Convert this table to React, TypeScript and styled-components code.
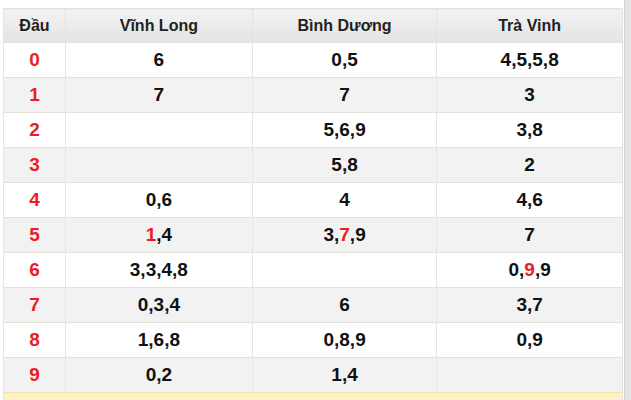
import styled, { createGlobalStyle } from "styled-components";

interface IRow {
  head: string;
  cols: string[];
}

// "*" before a digit marks it red
const rows: IRow[] = [
  { head: "0", cols: ["6", "0,5", "4,5,5,8"] },
  { head: "1", cols: ["7", "7", "3"] },
  { head: "2", cols: ["", "5,6,9", "3,8"] },
  { head: "3", cols: ["", "5,8", "2"] },
  { head: "4", cols: ["0,6", "4", "4,6"] },
  { head: "5", cols: ["*1,4", "3,*7,9", "7"] },
  { head: "6", cols: ["3,3,4,8", "", "0,*9,9"] },
  { head: "7", cols: ["0,3,4", "6", "3,7"] },
  { head: "8", cols: ["1,6,8", "0,8,9", "0,9"] },
  { head: "9", cols: ["0,2", "1,4", ""] },
];

const renderValue = (value: string) =>
  value.split(",").map((part, i) => (
    <span key={i}>
      {i > 0 && ","}
      {part.startsWith("*") ? <Hot>{part.slice(1)}</Hot> : part}
    </span>
  ));

export default function App() {
  return (
    <>
      <GlobalStyle />
      <Page>
        <Main>
          <LotoTable>
            <colgroup>
              <col style={{ width: "10%" }} />
              <col style={{ width: "30.2%" }} />
              <col style={{ width: "29.8%" }} />
              <col style={{ width: "30%" }} />
            </colgroup>
            <thead>
              <tr>
                <HeadCell>Đầu</HeadCell>
                <HeadCell>Vĩnh Long</HeadCell>
                <HeadCell>Bình Dương</HeadCell>
                <HeadCell>Trà Vinh</HeadCell>
              </tr>
            </thead>
            <tbody>
              {rows.map((row, idx) => (
                <Row key={row.head} odd={idx % 2 === 1}>
                  <HeadNum>{row.head}</HeadNum>
                  {row.cols.map((c, i) => (
                    <Cell key={i}>{renderValue(c)}</Cell>
                  ))}
                </Row>
              ))}
              <FooterRow>
                <td colSpan={4}></td>
              </FooterRow>
            </tbody>
          </LotoTable>
        </Main>
        <SideStrip />
      </Page>
    </>
  );
}

const GlobalStyle = createGlobalStyle`
  body {
    margin: 0;
    background: #ffffff;
    font-family: "Liberation Sans", Arial, sans-serif;
    overflow: hidden;
  }
`;

const Page = styled.div`
  display: flex;
  width: 631px;
  height: 400px;
  overflow: hidden;
`;

const Main = styled.div`
  width: 620px;
  padding: 8px 1px 0 3px;
`;

const SideStrip = styled.div`
  width: 7px;
  background: #e3e3e3;
  border-left: 1px solid #d2d2d2;
`;

const LotoTable = styled.table`
  width: 620px;
  border-collapse: collapse;
  table-layout: fixed;
  border: 1px solid #e2e2e2;
`;

const HeadCell = styled.th`
  height: 33px;
  padding: 0;
  background: linear-gradient(#f3f3f3, #e4e4e4);
  border: 1px solid #e2e2e2;
  color: #222222;
  font-size: 16px;
  font-weight: bold;
  text-align: center;
`;

const Row = styled.tr<{ odd: boolean }>`
  background: ${(props) => (props.odd ? "#f2f2f2" : "#ffffff")};
`;

const Cell = styled.td`
  height: 34px;
  padding: 0;
  border-left: 1px solid #e6e6e6;
  border-top: 1px solid #e4e2d8;
  color: #111111;
  font-size: 19px;
  line-height: 22px;
  font-weight: bold;
  text-align: center;
`;

const HeadNum = styled(Cell)`
  color: #ec1c24;
`;

const Hot = styled.span`
  color: #ec1c24;
`;

const FooterRow = styled.tr`
  background: #fff3c6;

  td {
    height: 40px;
    border-top: 1px solid #f3e3a8;
  }
`;
